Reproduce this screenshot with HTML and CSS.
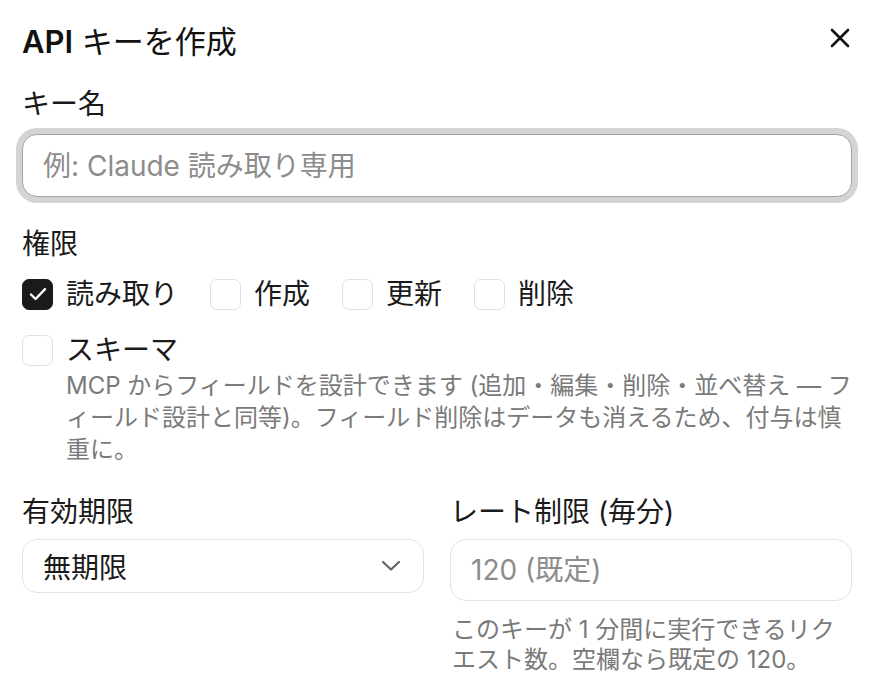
FILE: index.html
```html
<!DOCTYPE html>
<html lang="ja">
<head>
<meta charset="utf-8">
<title>API キーを作成</title>
<link rel="stylesheet" href="styles.css">
</head>
<body>
<div class="dialog">
  <div class="header">
    <h1 class="title"><span class="title-latin">API</span> キーを作成</h1>
    <button class="close" aria-label="閉じる">
      <svg width="24" height="24" viewBox="0 0 24 24"><path d="M4 4 L20 20 M20 4 L4 20" stroke="#111" stroke-width="2.6" stroke-linecap="round" fill="none"/></svg>
    </button>
  </div>

  <div class="field field-name">
    <label class="label">キー名</label>
    <input class="text-input focused" type="text" placeholder="例: Claude 読み取り専用">
  </div>

  <div class="perms">
    <div class="label">権限</div>
    <div class="check-row">
      <label class="check">
        <span class="box checked"><svg width="24" height="24" viewBox="0 0 24 24"><path d="M5 12.5 L9.6 17 L19 7.2" stroke="#fff" stroke-width="2.4" stroke-linecap="round" stroke-linejoin="round" fill="none"/></svg></span>
        <span class="check-label">読み取り</span>
      </label>
      <label class="check">
        <span class="box"></span>
        <span class="check-label">作成</span>
      </label>
      <label class="check">
        <span class="box"></span>
        <span class="check-label">更新</span>
      </label>
      <label class="check">
        <span class="box"></span>
        <span class="check-label">削除</span>
      </label>
    </div>
    <div class="check-row schema-row">
      <label class="check">
        <span class="box"></span>
        <span class="check-label">スキーマ</span>
      </label>
    </div>
    <p class="desc">MCP からフィールドを設計できます (追加・編集・削除・並べ替え — フィールド設計と同等)。フィールド削除はデータも消えるため、付与は慎重に。</p>
  </div>

  <div class="grid">
    <div class="col">
      <div class="label">有効期限</div>
      <div class="select">
        <span class="select-value">無期限</span>
        <svg width="20" height="12" viewBox="0 0 20 12"><path d="M2 2 L10 9.5 L18 2" stroke="#666" stroke-width="2.2" stroke-linecap="round" stroke-linejoin="round" fill="none"/></svg>
      </div>
    </div>
    <div class="col">
      <div class="label">レート制限 (毎分)</div>
      <input class="text-input rate" type="text" placeholder="120 (既定)">
      <p class="help">このキーが 1 分間に実行できるリクエスト数。空欄なら既定の 120。</p>
    </div>
  </div>
</div>
</body>
</html>
```

FILE: styles.css
```css
* { box-sizing: border-box; }

html, body {
  margin: 0;
  padding: 0;
  background: #ffffff;
}

body {
  font-family: "Inter", "Noto Sans CJK JP", sans-serif;
  color: #1a1a1a;
}

.dialog {
  padding: 20px 22px 0 22px;
}

.header {
  display: flex;
  justify-content: space-between;
  align-items: flex-start;
  height: 44px;
}

.title {
  margin: 0;
  font-size: 31px;
  line-height: 44px;
  font-weight: 400;
  color: #111;
}

.title-latin {
  font-weight: 600;
}

.close {
  margin-top: 6px;
  padding: 0;
  border: 0;
  background: none;
  width: 24px;
  height: 24px;
  display: flex;
}

.label {
  display: block;
  font-size: 28px;
  line-height: 40px;
  font-weight: 400;
  color: #1a1a1a;
}

.field-name {
  margin-top: 20px;
  display: flex;
  flex-direction: column;
  gap: 10px;
}

.text-input {
  width: 100%;
  font-family: inherit;
  font-size: 28px;
  color: #1a1a1a;
  background: #fff;
  border: 1.5px solid #e3e3e3;
  border-radius: 15px;
  padding: 0 20px;
  outline: none;
  height: 63px;
}

.text-input::placeholder {
  color: #8c8c8c;
}

.text-input.focused {
  border-color: #a3a3a3;
  box-shadow: 0 0 0 6px #d4d4d4;
}

.perms {
  margin-top: 27px;
}

.check-row {
  display: flex;
  gap: 32px;
  margin-top: 10px;
}

.schema-row {
  margin-top: 16px;
}

.check {
  display: flex;
  align-items: center;
  gap: 13px;
  height: 40px;
}

.box {
  width: 31px;
  height: 31px;
  border-radius: 7px;
  border: 1.5px solid #e0e0e0;
  background: #fff;
  display: flex;
  align-items: center;
  justify-content: center;
}

.box.checked {
  background: #1a1a1a;
  border-color: #1a1a1a;
}

.check-label {
  font-size: 28px;
  line-height: 40px;
  color: #1a1a1a;
}

.desc {
  margin: 0 0 0 44px;
  font-size: 24px;
  line-height: 32px;
  color: #7a7a7a;
}

.grid {
  display: grid;
  grid-template-columns: 1fr 1fr;
  column-gap: 26px;
  margin-top: 26px;
  align-items: start;
}

.col {
  display: flex;
  flex-direction: column;
}

.select {
  margin-top: 7px;
  height: 54px;
  border: 1.5px solid #e3e3e3;
  border-radius: 15px;
  display: flex;
  align-items: center;
  justify-content: space-between;
  padding: 0 22px 0 20px;
}

.select-value {
  font-size: 28px;
  color: #1a1a1a;
}

.rate {
  margin-top: 7px;
  height: 62px;
  border-radius: 16px;
}

.help {
  margin: 14px 0 0 2px;
  font-size: 24px;
  line-height: 30px;
  color: #7a7a7a;
}
```
